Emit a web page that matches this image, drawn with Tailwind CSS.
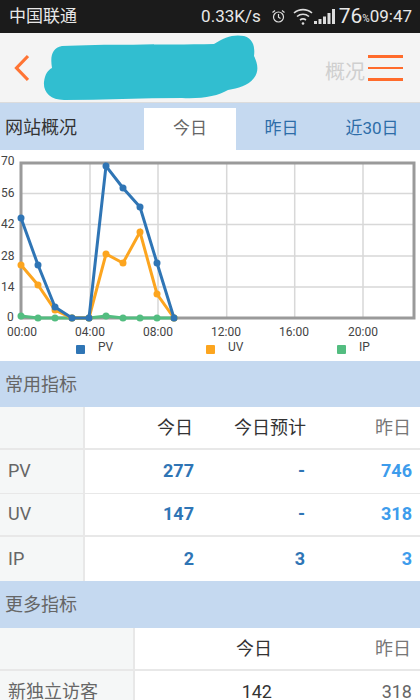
<!DOCTYPE html>
<html lang="en">
<head>
    <meta charset="UTF-8">
    <meta name="viewport" content="width=device-width, initial-scale=1.0">
    <title>网站概况</title>
    <script src="https://cdn.jsdelivr.net/npm/@tailwindcss/browser@4"></script>
</head>
<body class="bg-white overflow-hidden font-['Roboto','Noto_Sans_CJK_SC',sans-serif]">
    <div class="w-[420px] h-[700px] overflow-hidden">
        <!-- status bar -->
        <div class="h-[33px] bg-[#1b1b1b] text-[#e8e8e8] flex items-center pl-[9px] pr-[8px]">
            <span class="text-[17px] leading-none">中国联通</span>
            <span class="ml-auto text-[17px] leading-none">0.33K/s</span>
            <svg class="ml-[10px]" width="15" height="15" viewBox="0 0 15 15" fill="none" stroke="#ddd" stroke-width="1.2">
                <circle cx="7.5" cy="8" r="5"/><path d="M7.5 5v3.2l2 1.2M1.5 3.5L4 1.5M13.5 3.5L11 1.5"/>
            </svg>
            <svg class="ml-[7px]" width="20" height="18" viewBox="0 0 20 18" fill="none" stroke="#ddd" stroke-width="1.6">
                <path d="M1 5c5-4.500 13-4.500 18 0M4 8.500c3.500-3 8.500-3 12 0M7 12c2-1.500 4-1.500 6 0"/><circle cx="10" cy="15.500" r="1.300" fill="#ddd" stroke="none"/>
            </svg>
            <svg class="ml-[1px] mr-[3px]" width="22" height="16" viewBox="0 0 22 16" fill="#ddd">
                <rect x="0" y="12" width="3" height="3"/><rect x="4.500" y="10" width="3" height="5"/><rect x="9" y="7.500" width="3" height="7.500"/><rect x="13.500" y="4" width="3" height="11"/><rect x="18" y="0" width="3" height="15"/>
            </svg>
            <span class="text-[21px] leading-none">76</span>
            <span class="text-[10px] leading-none mt-[5px]">%</span>
            <span class="text-[17px] leading-none">09:47</span>
        </div>

        <!-- title bar -->
        <div class="relative h-[70px] bg-[#f4f4f4] border-b border-[#dcdcdc] flex items-center">
            <svg class="ml-[14px] mt-[1px]" width="15" height="28" viewBox="0 0 15 28" fill="none" stroke="#ff7434" stroke-width="3.200">
                <path d="M14 2L2.500 14L14 26"/>
            </svg>
            <svg class="absolute left-[42px] top-[1px]" width="218" height="68" viewBox="0 0 218 68">
                <path fill="#31bed0" d="M20 12 C60 10 120 11 172 10 C182 3 192 0 202 2 C212 5 213 14 212 22 C216 30 217 38 212 44 C206 52 196 54 186 56 C176 62 160 65 140 64 C100 64 60 66 22 66 C8 66 1 58 2 48 C3 40 6 36 10 34 C8 22 10 14 20 12 Z"/>
            </svg>
            <span class="ml-auto text-[#cfcfcf] text-[20px] mr-[3px] mt-[9px]">概况</span>
            <div class="mr-[17px] w-[35px] flex flex-col gap-[9px] mt-[1px]">
                <div class="h-[2.500px] bg-[#ff6b2b]"></div>
                <div class="h-[2.500px] bg-[#ff6b2b]"></div>
                <div class="h-[2.500px] bg-[#ff6b2b]"></div>
            </div>
        </div>

        <!-- tabs -->
        <div class="h-[47px] bg-[#c5d9f0] flex">
            <div class="w-[144px] pl-[5px] pt-[11px] text-[18px] text-[#333]">网站概况</div>
            <div class="w-[92px] mt-[5px] bg-white text-[#666] text-[17px] flex items-center justify-center">今日</div>
            <div class="w-[88px] mt-[5px] pl-[3px] text-[#2d6da8] text-[17px] flex items-center justify-center">昨日</div>
            <div class="flex-1 mt-[5px] text-[#2d6da8] text-[17px] flex items-center justify-center">近30日</div>
        </div>

        <!-- chart -->
        <svg class="block" width="420" height="211" viewBox="0 150 420 211" font-family="Roboto, sans-serif">
            <g stroke="#d8d8d8" stroke-width="1.500" fill="none">
                <path d="M21 193.500H414M21 224.500H414M21 256H414M21 287H414"/>
                <path d="M90 163V318M158 163V318M226.700 163V318M294.700 163V318M363 163V318"/>
            </g>
            <rect x="21" y="163" width="393" height="155" fill="none" stroke="#9a9a9a" stroke-width="3"/>
            <g font-size="12" fill="#444" text-anchor="start">
                <text x="1" y="165">70</text>
                <text x="1" y="197">56</text>
                <text x="1" y="228">42</text>
                <text x="1" y="260">28</text>
                <text x="1" y="291">14</text>
                <text x="7" y="321">0</text>
            </g>
            <g font-size="12" fill="#444" text-anchor="middle">
                <text x="22" y="336">00:00</text>
                <text x="90" y="336">04:00</text>
                <text x="158" y="336">08:00</text>
                <text x="226" y="336">12:00</text>
                <text x="294" y="336">16:00</text>
                <text x="363" y="336">20:00</text>
            </g>
            <g fill="#53bd80" stroke="#53bd80">
                <polyline fill="none" stroke-width="3" points="21,316 38,318 55,318 72,318 89,318 106,316 123,318 140,318 157,318 174,318"/>
                <g stroke="none">
                    <circle cx="21" cy="316" r="3.500"/><circle cx="38" cy="318" r="3.500"/><circle cx="55" cy="318" r="3.500"/><circle cx="72" cy="318" r="3.500"/><circle cx="89" cy="318" r="3.500"/><circle cx="106" cy="316" r="3.500"/><circle cx="123" cy="318" r="3.500"/><circle cx="140" cy="318" r="3.500"/><circle cx="157" cy="318" r="3.500"/><circle cx="174" cy="318" r="3.500"/>
                </g>
            </g>
            <g fill="#fca51f" stroke="#fca51f">
                <polyline fill="none" stroke-width="3" points="21,265 38,285 55,310 72,318 89,318 106,254 123,263 140,232 157,294 174,318"/>
                <g stroke="none">
                    <circle cx="21" cy="265" r="3.500"/><circle cx="38" cy="285" r="3.500"/><circle cx="55" cy="310" r="3.500"/><circle cx="72" cy="318" r="3.500"/><circle cx="89" cy="318" r="3.500"/><circle cx="106" cy="254" r="3.500"/><circle cx="123" cy="263" r="3.500"/><circle cx="140" cy="232" r="3.500"/><circle cx="157" cy="294" r="3.500"/><circle cx="174" cy="318" r="3.500"/>
                </g>
            </g>
            <g fill="#2f75b5" stroke="#2f75b5">
                <polyline fill="none" stroke-width="3" points="21,218 38,265 55,307 72,318 89,318 106,166 123,188 140,207 157,263 174,318"/>
                <g stroke="none">
                    <circle cx="21" cy="218" r="3.500"/><circle cx="38" cy="265" r="3.500"/><circle cx="55" cy="307" r="3.500"/><circle cx="72" cy="318" r="3.500"/><circle cx="89" cy="318" r="3.500"/><circle cx="106" cy="166" r="3.500"/><circle cx="123" cy="188" r="3.500"/><circle cx="140" cy="207" r="3.500"/><circle cx="157" cy="263" r="3.500"/><circle cx="174" cy="318" r="3.500"/>
                </g>
            </g>
            <rect x="76" y="345" width="9" height="9" rx="1" fill="#2f75b5"/>
            <rect x="206" y="345" width="9" height="9" rx="1" fill="#fca51f"/>
            <rect x="337" y="345" width="9" height="9" rx="1" fill="#53bd80"/>
            <g font-size="12" fill="#444">
                <text x="98" y="351">PV</text>
                <text x="228" y="351">UV</text>
                <text x="359" y="351">IP</text>
            </g>
        </svg>

        <!-- common metrics -->
        <div class="h-[46px] bg-[#c5d9f0] text-[#666] text-[18px] pl-[5px] flex items-center">常用指标</div>
        <div class="grid grid-cols-[85px_109px_112px_1fr]">
            <div class="h-[43px] bg-[#f5f7f7] border-r-2 border-b-2 border-[#e8e8e8]"></div>
            <div class="h-[43px] border-b-2 border-[#e8e8e8] flex items-center justify-end pr-[1px] text-[18px] text-[#333]">今日</div>
            <div class="h-[43px] border-b-2 border-[#e8e8e8] flex items-center justify-end text-[18px] text-[#333]">今日预计</div>
            <div class="h-[43px] border-b-2 border-[#e8e8e8] flex items-center justify-end pr-[9px] text-[18px] text-[#777]">昨日</div>

            <div class="h-[44px] bg-[#f5f7f7] border-r-2 border-b border-[#e8e8e8] flex items-center pl-[8px] pb-[2px] text-[18px] text-[#666]">PV</div>
            <div class="h-[44px] border-b border-[#e8e8e8] flex items-center justify-end pb-[2px] text-[18px] font-bold text-[#2f75b5]">277</div>
            <div class="h-[44px] border-b border-[#e8e8e8] flex items-center justify-end pb-[2px] pr-[1px] text-[18px] font-bold text-[#2f75b5]">-</div>
            <div class="h-[44px] border-b border-[#e8e8e8] flex items-center justify-end pb-[2px] pr-[8px] text-[18px] font-bold text-[#3d9cec]">746</div>

            <div class="h-[43px] bg-[#f5f7f7] border-r-2 border-b-2 border-[#e8e8e8] flex items-center pl-[8px] pb-[2px] text-[18px] text-[#666]">UV</div>
            <div class="h-[43px] border-b-2 border-[#e8e8e8] flex items-center justify-end pb-[2px] text-[18px] font-bold text-[#2f75b5]">147</div>
            <div class="h-[43px] border-b-2 border-[#e8e8e8] flex items-center justify-end pb-[2px] pr-[1px] text-[18px] font-bold text-[#2f75b5]">-</div>
            <div class="h-[43px] border-b-2 border-[#e8e8e8] flex items-center justify-end pb-[2px] pr-[8px] text-[18px] font-bold text-[#3d9cec]">318</div>

            <div class="h-[44px] bg-[#f5f7f7] border-r-2 border-[#e8e8e8] flex items-center pl-[8px] pb-[2px] text-[18px] text-[#666]">IP</div>
            <div class="h-[44px] flex items-center justify-end pb-[2px] text-[18px] font-bold text-[#2f75b5]">2</div>
            <div class="h-[44px] flex items-center justify-end pb-[2px] pr-[1px] text-[18px] font-bold text-[#2f75b5]">3</div>
            <div class="h-[44px] flex items-center justify-end pb-[2px] pr-[8px] text-[18px] font-bold text-[#3d9cec]">3</div>
        </div>

        <!-- more metrics -->
        <div class="h-[47px] bg-[#c5d9f0] text-[#666] text-[18px] pl-[5px] flex items-center">更多指标</div>
        <div class="grid grid-cols-[135px_137px_1fr]">
            <div class="h-[43px] bg-[#f5f7f7] border-r-2 border-b-2 border-[#e8e8e8]"></div>
            <div class="h-[43px] border-b-2 border-[#e8e8e8] flex items-center justify-end text-[18px] text-[#333]">今日</div>
            <div class="h-[43px] border-b-2 border-[#e8e8e8] flex items-center justify-end pr-[9px] text-[18px] text-[#777]">昨日</div>

            <div class="h-[43px] bg-[#f5f7f7] border-r-2 border-[#e8e8e8] flex items-center pl-[8px] pb-[2px] text-[18px] text-[#666]">新独立访客</div>
            <div class="h-[43px] flex items-center justify-end pb-[2px] text-[18px] text-[#333]">142</div>
            <div class="h-[43px] flex items-center justify-end pb-[2px] pr-[8px] text-[18px] text-[#666]">318</div>
        </div>
    </div>
</body>
</html>
